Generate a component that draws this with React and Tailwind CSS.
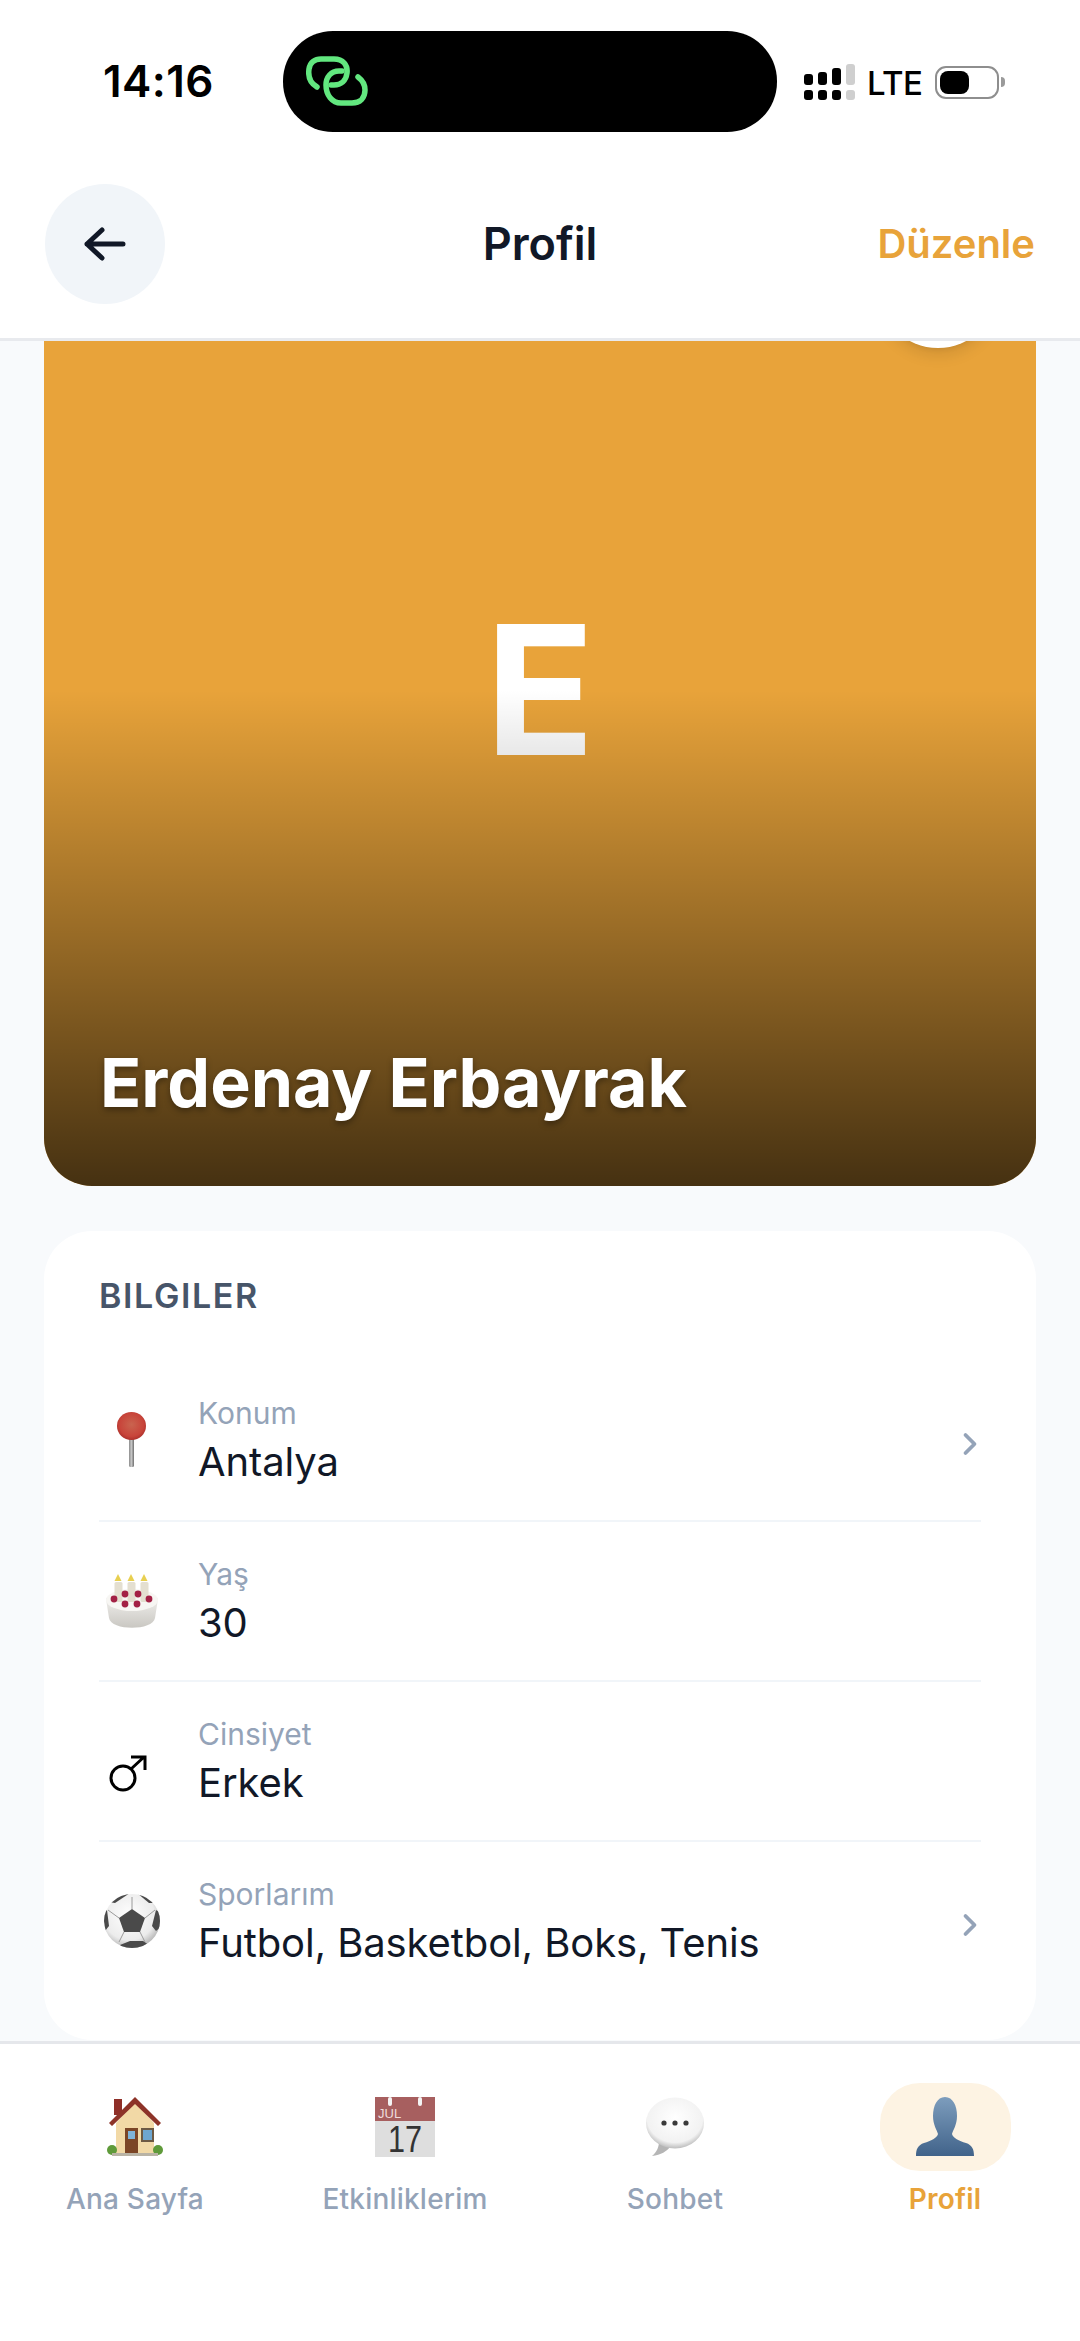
import { ChevronRight } from 'lucide-react'

function LinkLogo() {
  return (
    <svg width="62" height="50" viewBox="0 0 62 50" fill="none" stroke="#62e77f" strokeWidth="5.5" strokeLinecap="round">
      <path d="M11 31 C4 27 2 20 3 13 C4 6 9 3 15 3 L28 3 C37 3 42 9 41 17 C40 25 35 29 28 29 L25 29" />
      <path d="M36 15 L33 15 C25 15 20 21 20 29 C20 39 26 47 35 47 L46 47 C54 47 59 42 59 34 C59 28 56 24 52 21" />
    </svg>
  )
}

function SignalIcon() {
  const cols = [
    { top: 'h-[11px] bg-black', bottom: 'bg-black' },
    { top: 'h-[13px] bg-black', bottom: 'bg-black' },
    { top: 'h-[17px] bg-black', bottom: 'bg-black' },
    { top: 'h-[21px] bg-[#cfcfcf]', bottom: 'bg-[#cfcfcf]' },
  ]
  return (
    <div className="flex items-end gap-[5px]">
      {cols.map((c, i) => (
        <div key={i} className="flex flex-col items-center gap-[5px]">
          <div className={`w-[9px] rounded-[3px] ${c.top}`}></div>
          <div className={`w-[9px] h-[10px] rounded-[3px] ${c.bottom}`}></div>
        </div>
      ))}
    </div>
  )
}

function Battery() {
  return (
    <div className="flex items-center">
      <div className="w-[64px] h-[33px] rounded-[11px] border-[2px] border-[#8e8e8e] p-[3px]">
        <div className="w-[29px] h-full rounded-[8px] bg-black"></div>
      </div>
      <div className="w-[4px] h-[10px] ml-[2px] rounded-r-full bg-[#9a9a9a]"></div>
    </div>
  )
}

function PinIcon() {
  return (
    <svg width="34" height="58" viewBox="0 0 34 58">
      <defs>
        <radialGradient id="pinHead" cx="50%" cy="45%" r="60%">
          <stop offset="0%" stopColor="#c9644f" />
          <stop offset="70%" stopColor="#c8443a" />
          <stop offset="100%" stopColor="#a32a27" />
        </radialGradient>
        <linearGradient id="pinStem" x1="0" x2="1" y1="0" y2="0">
          <stop offset="0%" stopColor="#8d8d8d" />
          <stop offset="50%" stopColor="#c4c4c4" />
          <stop offset="100%" stopColor="#6f6f6f" />
        </linearGradient>
      </defs>
      <rect x="14" y="24" width="5" height="32" rx="1.5" fill="url(#pinStem)" />
      <ellipse cx="16.5" cy="15" rx="14.5" ry="14" fill="url(#pinHead)" />
    </svg>
  )
}

function CakeIcon() {
  const candles = [13, 26, 39]
  const berries = [[9, 25], [20, 30], [32, 30], [44, 25], [20, 20], [33, 20]]
  return (
    <svg width="54" height="56" viewBox="0 0 54 56">
      <defs>
        <linearGradient id="cakeBody" x1="0" x2="0" y1="0" y2="1">
          <stop offset="0%" stopColor="#f4f3f0" />
          <stop offset="100%" stopColor="#c9c7c2" />
        </linearGradient>
      </defs>
      <path d="M1 26 C1 20 53 20 53 26 L50 45 C48 58 6 58 4 45 Z" fill="url(#cakeBody)" />
      <ellipse cx="27" cy="27" rx="26" ry="11" fill="#f7f6f3" />
      {candles.map((x) => (
        <g key={x}>
          <rect x={x - 3.5} y="9" width="8" height="20" rx="1.5" fill="#e4dfd0" />
          <path d={`M${x} 1 L${x + 3.5} 8 L${x - 3.5} 8 Z`} fill="#e8cf50" />
        </g>
      ))}
      {berries.map(([x, y]) => (
        <circle key={`${x}-${y}`} cx={x} cy={y + 1} r="3.4" fill="#a32145" />
      ))}
    </svg>
  )
}

function MaleIcon() {
  return (
    <svg width="38" height="38" viewBox="0 0 38 38" fill="none" stroke="#000" strokeWidth="3">
      <ellipse cx="14" cy="24" rx="12" ry="12" />
      <path d="M22 15 L35 3 M22 3 H36 V16" />
    </svg>
  )
}

function BallIcon() {
  return (
    <svg width="58" height="56" viewBox="0 0 58 56">
      <defs>
        <radialGradient id="ballBody" cx="45%" cy="40%" r="65%">
          <stop offset="0%" stopColor="#ffffff" />
          <stop offset="70%" stopColor="#ececec" />
          <stop offset="100%" stopColor="#a9a9a9" />
        </radialGradient>
        <clipPath id="ballClip">
          <ellipse cx="29" cy="28" rx="28" ry="27" />
        </clipPath>
      </defs>
      <ellipse cx="29" cy="28" rx="28" ry="27" fill="url(#ballBody)" />
      <g clipPath="url(#ballClip)" fill="#4a4a4a">
        <path d="M29 16 L42 25 L37 39 L21 39 L16 25 Z" />
        <path d="M15 2 L27 0 L12 10 L6 9 Z" />
        <path d="M34 0 L46 2 L54 10 L46 10 Z" />
        <path d="M0 20 L4 17 L6 33 L2 38 Z" />
        <path d="M58 20 L53 17 L49 33 L53 38 L58 34 Z" />
        <path d="M17 52 L27 48 L40 48 L46 52 L36 58 L22 58 Z" />
      </g>
      <g stroke="#9a9a9a" strokeWidth="1" fill="none" clipPath="url(#ballClip)">
        <path d="M29 16 L29 4 M42 25 L52 17 M37 39 L42 49 M21 39 L16 49 M16 25 L5 17" />
      </g>
    </svg>
  )
}

function HouseIcon() {
  return (
    <svg width="58" height="60" viewBox="0 0 58 60">
      <rect x="8" y="2" width="8" height="16" fill="#8f2f28" />
      <path d="M10 26 L29 5 L48 26 V56 H10 Z" fill="#f2d9a6" />
      <path d="M3 26 L29 0 L55 26 L52 29 L29 7 L6 29 Z" fill="#8d3328" />
      <rect x="19" y="31" width="13" height="25" fill="#7b4526" />
      <rect x="22" y="34" width="7" height="8" fill="#7fb3d8" />
      <rect x="35" y="31" width="13" height="14" fill="#6d5a44" />
      <rect x="37" y="33" width="9" height="10" fill="#6ea6d0" />
      <circle cx="6" cy="53" r="5" fill="#5f9a3a" />
      <circle cx="52" cy="53" r="5" fill="#5f9a3a" />
      <rect x="6" y="56" width="46" height="3" fill="#b9b3a5" />
    </svg>
  )
}

function CalendarIcon() {
  return (
    <svg width="60" height="68" viewBox="0 0 60 68" className="mt-[8px]">
      <rect x="0" y="0" width="60" height="24" fill="#a75f5f" />
      <rect x="0" y="24" width="60" height="36" fill="#dedede" />
      <rect x="13" y="0" width="4" height="9" rx="2" fill="#f4f4f4" />
      <rect x="43" y="0" width="4" height="9" rx="2" fill="#f4f4f4" />
      <text x="3" y="21" fontSize="13" fontFamily="Liberation Sans, sans-serif" fill="#efdcdc">JUL</text>
      <text x="13" y="55" textLength="34" lengthAdjust="spacingAndGlyphs" fontSize="37" fontFamily="Liberation Sans, sans-serif" fill="#333333">17</text>
    </svg>
  )
}

function BubbleIcon() {
  return (
    <svg width="60" height="60" viewBox="0 0 60 60">
      <defs>
        <radialGradient id="bubbleFill" cx="50%" cy="40%" r="60%">
          <stop offset="0%" stopColor="#ffffff" />
          <stop offset="80%" stopColor="#f2f2f2" />
          <stop offset="100%" stopColor="#bdbdbd" />
        </radialGradient>
      </defs>
      <path d="M14 44 C14 50 12 55 7 59 C16 58 22 54 25 50 Z" fill="#b5b5b5" />
      <ellipse cx="30" cy="26" rx="29" ry="25.5" fill="url(#bubbleFill)" />
      <circle cx="19" cy="26" r="2.6" fill="#3a3a3a" />
      <circle cx="30" cy="26" r="2.6" fill="#3a3a3a" />
      <circle cx="41" cy="26" r="2.6" fill="#3a3a3a" />
    </svg>
  )
}

function BustIcon() {
  return (
    <svg width="60" height="60" viewBox="0 0 60 60">
      <defs>
        <linearGradient id="bustFill" x1="0" x2="0" y1="0" y2="1">
          <stop offset="0%" stopColor="#7d9dbd" />
          <stop offset="100%" stopColor="#41638a" />
        </linearGradient>
      </defs>
      <path d="M30 0 C38 0 42 9 42 19 C42 28 38 33 37 37 C38 41 44 44 51 46 C57 48 59 52 59 59 H1 C1 52 3 48 9 46 C16 44 22 41 23 37 C22 33 18 28 18 19 C18 9 22 0 30 0 Z" fill="url(#bustFill)" />
    </svg>
  )
}

const rows = [
  { label: 'Konum', value: 'Antalya', icon: <PinIcon />, arrow: true },
  { label: 'Yaş', value: '30', icon: <CakeIcon /> },
  { label: 'Cinsiyet', value: 'Erkek', icon: <div className="mt-[24px] -ml-[8px]"><MaleIcon /></div> },
  { label: 'Sporlarım', value: 'Futbol, Basketbol, Boks, Tenis', icon: <BallIcon />, arrow: true },
]

const tabs = [
  { label: 'Ana Sayfa', icon: <HouseIcon /> },
  { label: 'Etkinliklerim', icon: <CalendarIcon /> },
  { label: 'Sohbet', icon: <BubbleIcon /> },
  { label: 'Profil', icon: <BustIcon />, active: true },
]

export default function App() {
  return (
    <div className="h-[2341px] w-[1080px] flex flex-col overflow-hidden bg-white font-['Inter',sans-serif]">
      {/* Status bar */}
      <div className="h-[165px] shrink-0 pt-[31px] pl-[103px] pr-[38px] flex items-start bg-white">
        <span className="w-[180px] mt-[26px] text-[44px] leading-[48px] font-semibold text-black tracking-[0.4px]">14:16</span>
        <div className="w-[494px] h-[101px] rounded-[50px] bg-black flex items-center pl-[23px] pb-[2px]">
          <LinkLogo />
        </div>
        <div className="ml-[27px] mt-[30px] flex items-center gap-[12px]">
          <SignalIcon />
          <span className="mt-[2px] text-[33px] leading-[40px] font-medium text-black tracking-[-0.5px]">LTE</span>
          <Battery />
        </div>
      </div>

      {/* Header */}
      <div className="relative z-10 h-[176px] shrink-0 flex items-start justify-between pt-[19px] pl-[45px] pr-[45px] bg-white border-b-[3px] border-[#e8eaee]">
        <button className="w-[120px] h-[120px] rounded-full bg-[#f1f5f9] flex items-center justify-center">
          <svg width="42" height="34" viewBox="0 0 42 34" fill="none" stroke="#111827" strokeWidth="5" strokeLinecap="round" strokeLinejoin="round">
            <path d="M3 17 H39 M18 3 L3 17 L18 31" />
          </svg>
        </button>
        <h1 className="absolute left-0 right-0 top-[39px] text-center text-[45px] leading-[80px] font-semibold text-[#111827]">Profil</h1>
        <span className="mt-[20px] text-[40px] leading-[80px] font-semibold text-[#e8a33a]">Düzenle</span>
      </div>

      {/* Scrolled content */}
      <div className="flex-1 min-h-0 overflow-hidden bg-[#f8fafc] px-[44px]">
        <div className="relative -mt-[147px] h-[992px] rounded-[48px] overflow-hidden bg-[#e8a33a] flex items-center justify-center">
          <span className="text-[180px] leading-none font-bold text-white">E</span>
          <div className="absolute inset-0 bg-gradient-to-b from-transparent from-50% to-black/70"></div>
          <div className="absolute right-[38px] top-[34px] w-[120px] h-[120px] rounded-full bg-white shadow-lg"></div>
          <span className="absolute left-[56px] bottom-[64px] text-[68px] leading-[80px] font-bold text-white [text-shadow:0_3px_6px_rgba(0,0,0,0.35)]">Erdenay Erbayrak</span>
        </div>

        <div className="mt-[45px] rounded-[48px] bg-white px-[55px] pt-[45px] pb-[40px]">
          <h2 className="text-[34px] leading-[40px] font-semibold tracking-[1.6px] text-[#475569]">BILGILER</h2>
          <div className="mt-[44px]">
            {rows.map((row, i) => (
              <div key={row.label} className={`h-[160px] flex items-center ${i > 0 ? 'border-t-[2px] border-[#f1f5f9]' : ''}`}>
                <div className="w-[66px] mr-[33px] flex justify-center">{row.icon}</div>
                <div className="flex-1">
                  <p className="text-[30px] leading-[36px] text-[#94a3b8]">{row.label}</p>
                  <p className="mt-[7px] text-[40px] leading-[48px] tracking-[-0.1px] text-[#111827]">{row.value}</p>
                </div>
                {row.arrow && <ChevronRight size={36} strokeWidth={2.5} className="-mr-[7px] mt-[8px] text-[#94a3b8]" />}
              </div>
            ))}
          </div>
        </div>
      </div>

      {/* Bottom tabs */}
      <div className="relative z-10 h-[300px] shrink-0 grid grid-cols-4 bg-white border-t-[3px] border-[#e5e7eb] pt-[39px]">
        {tabs.map((tab) => (
          <div key={tab.label} className="flex flex-col items-center">
            <div className={`w-[131px] h-[88px] rounded-[40px] flex items-center justify-center ${tab.active ? 'bg-[#fdf3e3]' : ''}`}>
              {tab.icon}
            </div>
            <span className={`mt-[10px] text-[28px] leading-[36px] font-medium tracking-[0.2px] ${tab.active ? 'text-[#e8a33a] font-semibold' : 'text-[#94a3b8]'}`}>{tab.label}</span>
          </div>
        ))}
      </div>
    </div>
  )
}
